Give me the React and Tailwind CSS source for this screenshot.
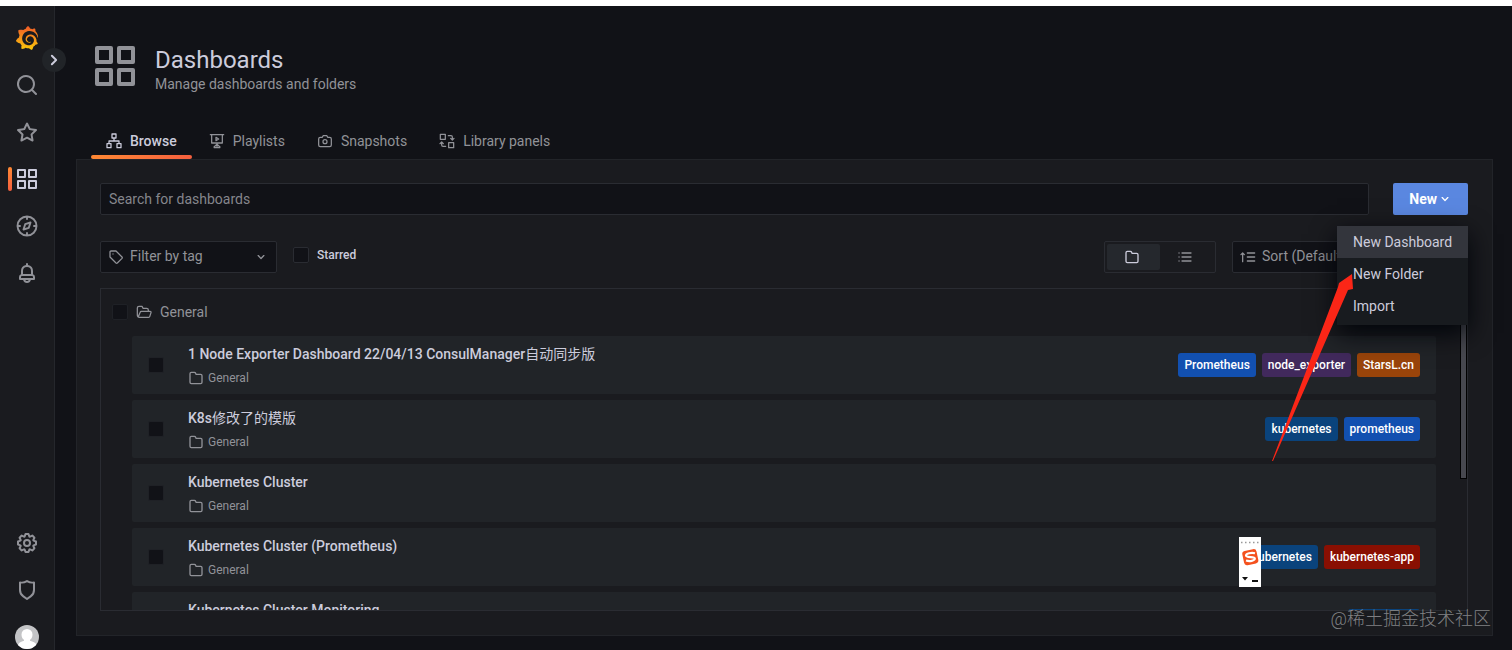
import { SiGrafana } from 'react-icons/si';

const SOLID = {
  apps: 'M10,13H3a1,1,0,0,0-1,1v7a1,1,0,0,0,1,1h7a1,1,0,0,0,1-1V14A1,1,0,0,0,10,13ZM9,20H4V15H9ZM21,2H14a1,1,0,0,0-1,1v7a1,1,0,0,0,1,1h7a1,1,0,0,0,1-1V3A1,1,0,0,0,21,2ZM20,9H15V4h5Zm1,4H14a1,1,0,0,0-1,1v7a1,1,0,0,0,1,1h7a1,1,0,0,0,1-1V14A1,1,0,0,0,21,13Zm-1,7H15V15h5ZM10,2H3A1,1,0,0,0,2,3v7a1,1,0,0,0,1,1h7a1,1,0,0,0,1-1V3A1,1,0,0,0,10,2ZM9,9H4V4H9Z',
  search: 'M21.71,20.29,18,16.61A9,9,0,1,0,16.61,18l3.68,3.68a1,1,0,0,0,1.42,0A1,1,0,0,0,21.71,20.29ZM11,18a7,7,0,1,1,7-7A7,7,0,0,1,11,18Z',
  star: 'M22,9.67A1,1,0,0,0,21.14,9l-5.69-.83L12.9,3a1,1,0,0,0-1.8,0L8.55,8.16,2.86,9a1,1,0,0,0-.81.68,1,1,0,0,0,.25,1l4.13,4-1,5.68A1,1,0,0,0,6.9,21.44L12,18.77l5.1,2.67a.93.93,0,0,0,.46.12,1,1,0,0,0,.59-.19,1,1,0,0,0,.4-1l-1-5.68,4.13-4A1,1,0,0,0,22,9.67Zm-6.15,4a1,1,0,0,0-.29.88l.72,4.2-3.76-2a1.06,1.06,0,0,0-.94,0l-3.76,2,.72-4.2a1,1,0,0,0-.29-.88l-3-3,4.21-.61a1,1,0,0,0,.76-.55L12,5.7l1.88,3.82a1,1,0,0,0,.76.55l4.21.61Z',
  folder: 'M19,5.5H12.72l-.32-1a3,3,0,0,0-2.84-2H5a3,3,0,0,0-3,3v13a3,3,0,0,0,3,3H19a3,3,0,0,0,3-3V8.5A3,3,0,0,0,19,5.5Zm1,13a1,1,0,0,1-1,1H5a1,1,0,0,1-1-1V5.5a1,1,0,0,1,1-1H9.56a1,1,0,0,1,.95.68l.54,1.64A1,1,0,0,0,12,7.5h7a1,1,0,0,1,1,1Z',
  bell: 'M18,13.18V10a6,6,0,0,0-5-5.91V3a1,1,0,0,0-2,0V4.09A6,6,0,0,0,6,10v3.18A3,3,0,0,0,4,16v2a1,1,0,0,0,1,1H8.14a4,4,0,0,0,7.72,0H19a1,1,0,0,0,1-1V16A3,3,0,0,0,18,13.18ZM8,10a4,4,0,0,1,8,0v3H8Zm4,10a2,2,0,0,1-1.72-1h3.44A2,2,0,0,1,12,20Zm6-3H6V16a1,1,0,0,1,1-1H17a1,1,0,0,1,1,1Z',
  down: 'M17,9.17a1,1,0,0,0-1.41,0L12,12.71,8.46,9.17a1,1,0,0,0-1.41,0,1,1,0,0,0,0,1.42l4.24,4.24a1,1,0,0,0,1.42,0L17,10.59A1,1,0,0,0,17,9.17Z',
  right: 'M14.83,11.29,10.59,7.05a1,1,0,0,0-1.42,0,1,1,0,0,0,0,1.41L12.71,12,9.17,15.54a1,1,0,0,0,0,1.41,1,1,0,0,0,.71.29,1,1,0,0,0,.71-.29l4.24-4.24A1,1,0,0,0,14.83,11.29Z',
  shield: 'M19.63,3.65a1,1,0,0,0-.84-.2,8,8,0,0,1-6.22-1.27,1,1,0,0,0-1.14,0A8,8,0,0,1,5.21,3.45a1,1,0,0,0-.84.2A1,1,0,0,0,4,4.43v7.45a9,9,0,0,0,3.77,7.33l3.65,2.6a1,1,0,0,0,1.16,0l3.65-2.6A9,9,0,0,0,20,11.88V4.43A1,1,0,0,0,19.63,3.65ZM18,11.88a7,7,0,0,1-2.93,5.7L12,19.77,8.93,17.58A7,7,0,0,1,6,11.88V5.58a10,10,0,0,0,6-1.39,10,10,0,0,0,6,1.39Z',
  cog: 'M21.32,9.55l-1.89-.63.89-1.78A1,1,0,0,0,20.13,6L18,3.87a1,1,0,0,0-1.15-.19l-1.78.89-.63-1.89A1,1,0,0,0,13.5,2h-3a1,1,0,0,0-.95.68L8.92,4.57,7.14,3.68A1,1,0,0,0,6,3.87L3.87,6a1,1,0,0,0-.19,1.15l.89,1.78-1.89.63A1,1,0,0,0,2,10.5v3a1,1,0,0,0,.68.95l1.89.63-.89,1.78A1,1,0,0,0,3.87,18L6,20.13a1,1,0,0,0,1.15.19l1.78-.89.63,1.89a1,1,0,0,0,.95.68h3a1,1,0,0,0,.95-.68l.63-1.89,1.78.89A1,1,0,0,0,18,20.13L20.13,18a1,1,0,0,0,.19-1.15l-.89-1.78,1.89-.63A1,1,0,0,0,22,13.5v-3A1,1,0,0,0,21.32,9.55ZM20,12.78l-1.2.4A2,2,0,0,0,17.64,16l.57,1.14-1.1,1.1L16,17.64a2,2,0,0,0-2.79,1.16l-.4,1.2H11.22l-.4-1.2A2,2,0,0,0,8,17.64l-1.14.57-1.1-1.1L6.36,16A2,2,0,0,0,5.2,13.18L4,12.78V11.22l1.2-.4A2,2,0,0,0,6.36,8L5.79,6.89l1.1-1.1L8,6.36A2,2,0,0,0,10.82,5.2l.4-1.2h1.56l.4,1.2A2,2,0,0,0,16,6.36l1.14-.57,1.1,1.1L17.64,8a2,2,0,0,0,1.16,2.79l1.2.4ZM12,8a4,4,0,1,0,4,4A4,4,0,0,0,12,8Zm0,6a2,2,0,1,1,2-2A2,2,0,0,1,12,14Z',
};

const LINE = {
  compass: 'M12 2.500a9.500 9.500 0 1 0 0 19a9.500 9.500 0 1 0 0-19ZM12 3v2M12 19v2M3 12h2M19 12h2M15.500 8.500l-1.700 5.300-5.300 1.700 1.700-5.300Z',
  sitemap: 'M9 1.500h6v6H9ZM1.500 16h6v6h-6ZM16.500 16h6v6h-6ZM12 7.500v4.500M4.500 16v-4h15v4',
  playlist: 'M2 2.500h20M4 3v12h16V3M12 15v7M12 17l-4.500 4M12 17l4.500 4M8 22h8M10.500 6.500v5l4-2.500Z',
  camera: 'M5 6.500h3l1.200-2.500h5.600L16 6.500h3a2.500 2.500 0 0 1 2.500 2.500V18a2.500 2.500 0 0 1-2.500 2.500H5a2.500 2.500 0 0 1-2.500-2.500V9a2.500 2.500 0 0 1 2.500-2.500ZM12 10a3 3 0 1 0 0 6a3 3 0 1 0 0-6Z',
  library: 'M2 2h7.500v7.500H2ZM14.500 14.500H22V22h-7.500ZM14 4h4a2 2 0 0 1 2 2v4M17.500 8l2.500 2.500L22.500 8M10 20H6a2 2 0 0 1-2-2v-4M1.500 16L4 13.500 6.500 16',
  tag: 'M3 4.500A1.500 1.500 0 0 1 4.500 3H12l9 9a1.500 1.500 0 0 1 0 2l-7 7a1.500 1.500 0 0 1-2 0l-9-9ZM7.500 7.500v.1',
  list: 'M3 6h.1M7.500 6H21M3 12h.1M7.500 12H21M3 18h.1M7.500 18H21',
  sort: 'M4 19V6M1.500 8.500L4 6l2.500 2.500M11 6h11M11 12h11M11 18h11',
  folderOpen: 'M5 20a3 3 0 0 1-3-3V6a2.500 2.500 0 0 1 2.500-2.500H9L10.500 6.500H16a2.500 2.500 0 0 1 2.500 2.500V11M3.500 19l2.700-6.700A2 2 0 0 1 8 11H21a1.500 1.500 0 0 1 1.500 2l-1.800 5.500a2 2 0 0 1-1.900 1.500H5',
};

function Icon({ name, className }) {
  if (SOLID[name]) {
    return (
      <svg viewBox="0 0 24 24" fill="currentColor" aria-hidden="true" className={`shrink-0 ${className}`}>
        <path d={SOLID[name]} />
      </svg>
    );
  }
  return (
    <svg viewBox="0 0 24 24" fill="none" stroke="currentColor" strokeWidth="1.900" strokeLinecap="round" strokeLinejoin="round" aria-hidden="true" className={`shrink-0 ${className}`}>
      <path d={LINE[name]} />
    </svg>
  );
}

function NavItem({ icon, label, active }) {
  return (
    <a href="#" aria-label={label} className={`relative flex h-6 w-full items-center justify-center ${active ? 'text-[#ccccdc]' : 'text-[#919298]'}`}>
      {active && <span className="absolute left-2 h-6 w-1 rounded-sm bg-linear-to-b from-[#ff8833] to-[#f55f3e]" />}
      <Icon name={icon} className="size-6" />
    </a>
  );
}

function Sidebar() {
  return (
    <nav className="relative flex w-[55px] shrink-0 flex-col justify-between border-r border-[#25272c] bg-[#1a1b1f] pt-5 pb-px">
      <div className="flex flex-col gap-[23px]">
        <a href="#" aria-label="Grafana" className="flex h-6 justify-center">
          <svg width="0" height="0" className="absolute">
            <defs>
              <linearGradient id="logo" x1="0" y1="0" x2="0" y2="1">
                <stop offset="0" stopColor="#f05a28" />
                <stop offset="1" stopColor="#fbca0a" />
              </linearGradient>
            </defs>
          </svg>
          <SiGrafana fill="url(#logo)" className="size-6" />
        </a>
        <NavItem icon="search" label="Search dashboards" />
        <NavItem icon="star" label="Starred" />
        <NavItem icon="apps" label="Dashboards" active />
        <NavItem icon="compass" label="Explore" />
        <NavItem icon="bell" label="Alerting" />
      </div>
      <div className="flex flex-col gap-[23px]">
        <NavItem icon="cog" label="Configuration" />
        <NavItem icon="shield" label="Server admin" />
        <a href="#" aria-label="Profile" className="flex h-6 justify-center">
          <svg viewBox="0 0 24 24" className="size-6" aria-hidden="true">
            <clipPath id="avatar"><circle cx="12" cy="12" r="12" /></clipPath>
            <g clipPath="url(#avatar)">
              <rect width="24" height="24" fill="#c3c4c6" />
              <path d="M12 4a5.500 5.500 0 0 1 5.500 5.500c0 2.500-1 4.300-2.500 5.300v1c3 .8 5.500 1.700 6.500 4.200V24H3v-4c1-2.500 3-3.400 6-4.200v-1c-1.500-1-2.500-2.800-2.500-5.300A5.500 5.500 0 0 1 12 4Z" fill="#fff" />
            </g>
          </svg>
        </a>
      </div>
      <button type="button" aria-label="Expand menu" className="absolute top-[42px] -right-3 flex size-6 items-center justify-center rounded-full bg-[#212428] text-[#ccccdc]">
        <Icon name="right" className="size-6" />
      </button>
    </nav>
  );
}

const TABS = [
  { icon: 'sitemap', label: 'Browse', active: true },
  { icon: 'playlist', label: 'Playlists' },
  { icon: 'camera', label: 'Snapshots' },
  { icon: 'library', label: 'Library panels' },
];

const ROWS = [
  {
    title: '1 Node Exporter Dashboard 22/04/13 ConsulManager',
    suffix: '自动同步版',
    tags: [
      { name: 'Prometheus', color: 'bg-[#1250b0]' },
      { name: 'node_exporter', color: 'bg-[#41295c]' },
      { name: 'StarsL.cn', color: 'bg-[#99440a]' },
    ],
  },
  {
    title: 'K8s',
    suffix: '修改了的模版',
    tags: [
      { name: 'kubernetes', color: 'bg-[#0a437c]' },
      { name: 'prometheus', color: 'bg-[#1250b0]' },
    ],
  },
  { title: 'Kubernetes Cluster', tags: [] },
  {
    title: 'Kubernetes Cluster (Prometheus)',
    tags: [
      { name: 'kubernetes', color: 'bg-[#0a437c]' },
      { name: 'kubernetes-app', color: 'bg-[#890f02]' },
    ],
  },
  { title: 'Kubernetes Cluster Monitoring', tags: [{ name: 'kubernetes', color: 'bg-[#0a437c]' }] },
];

function Check({ label }) {
  return <input type="checkbox" aria-label={label} className="size-4 shrink-0 appearance-none rounded-xs border border-[#1f2126] bg-[#111217]" />;
}

function Row({ title, suffix, tags }) {
  return (
    <li className="flex h-[58px] shrink-0 items-center rounded-xs bg-[#212428] px-4">
      <Check label={`Select ${title}`} />
      <div className="ml-6 flex min-w-0 flex-1 flex-col gap-1.5 pb-px">
        <a href="#" className="truncate text-[14px] leading-5 font-medium text-[#ccccdc]">
          {title}
          {suffix && <span className="font-normal">{suffix}</span>}
        </a>
        <span className="flex items-center gap-1 text-[12px] leading-4 text-[#919298]">
          <Icon name="folder" className="size-4" />
          General
        </span>
      </div>
      <div className="flex gap-1.5">
        {tags.map((t) => (
          <span key={t.name} className={`rounded-[3px] px-1.5 py-1 text-[12px] leading-4 font-medium text-white ${t.color}`}>{t.name}</span>
        ))}
      </div>
    </li>
  );
}

function NewMenu() {
  return (
    <div className="relative">
      <button type="button" className="flex h-8 items-center rounded-xs bg-[#5a87e0] pr-[15px] pl-4 text-[14px] font-bold text-white">
        New
        <Icon name="down" className="size-4" />
      </button>
      <div role="menu" className="absolute top-full right-0 z-10 mt-[11px] flex w-[131px] flex-col bg-[#181b1f] pb-[3px] shadow-[0_8px_24px_rgb(1,4,9)]">
        <button type="button" role="menuitem" className="h-8 bg-[#33353c] px-4 text-left text-[14px] whitespace-nowrap text-[#ccccdc]">New Dashboard</button>
        <button type="button" role="menuitem" className="h-8 px-4 text-left text-[14px] text-[#ccccdc]">New Folder</button>
        <button type="button" role="menuitem" className="h-8 px-4 text-left text-[14px] text-[#ccccdc]">Import</button>
      </div>
    </div>
  );
}

export default function App() {
  return (
    <div className="relative flex h-screen flex-col overflow-hidden bg-[#111217] font-[Roboto,'Noto_Sans_CJK_SC',sans-serif] text-[14px] text-[#919298]">
      <div className="h-1.5 shrink-0 bg-white" />
      <div className="flex min-h-0 flex-1">
        <Sidebar />
        <main className="flex min-w-0 flex-1 flex-col pr-[19px] pb-3.5 pl-[21px]">
          <header className="flex items-start gap-4 px-[15px] pt-9">
            <Icon name="apps" className="size-12" />
            <div className="pt-0.5">
              <h1 className="text-[24px] leading-8 text-[#ccccdc]">Dashboards</h1>
              <p className="leading-4">Manage dashboards and folders</p>
            </div>
          </header>
          <div role="tablist" className="mt-[31px] flex gap-0.5 px-[15px]">
            {TABS.map((t) => (
              <button
                key={t.label}
                type="button"
                role="tab"
                aria-selected={!!t.active}
                className={`relative flex h-9 items-center gap-2 px-[15px] ${t.active ? 'font-medium text-[#ccccdc]' : ''}`}
              >
                <Icon name={t.icon} className="size-4" />
                {t.label}
                {t.active && <span className="absolute inset-x-0 bottom-0 h-1 rounded-xs bg-linear-to-r from-[#ff8833] to-[#f55f3e]" />}
              </button>
            ))}
          </div>
          <section className="flex min-h-0 flex-1 flex-col border border-[#222429] bg-[#1a1b1f] pt-[23px] pr-6 pb-6 pl-[23px]">
            <div className="flex gap-6">
              <input type="text" aria-label="Search for dashboards" placeholder="Search for dashboards" className="h-8 min-w-0 flex-1 rounded-xs border border-[#2a2c32] bg-[#111217] px-2 placeholder:text-[#85868c]" />
              <NewMenu />
            </div>
            <div className="mt-[26px] flex items-center">
              <div className="relative flex items-center">
                <Icon name="tag" className="absolute left-2 size-4" />
                <select aria-label="Filter by tag" className="h-8 w-[177px] appearance-none rounded-xs border border-[#2a2c32] bg-[#111217] pb-0.5 pl-[29px]">
                  <option>Filter by tag</option>
                </select>
                <Icon name="down" className="pointer-events-none absolute right-2 size-4" />
              </div>
              <label className="ml-4 flex items-center gap-2 pb-1 text-[12px] font-medium text-[#ccccdc]">
                <input type="checkbox" className="size-4 appearance-none rounded-xs border border-[#2a2c32] bg-[#111217]" />
                Starred
              </label>
              <div className="mr-4 ml-auto flex h-8 w-28 rounded-xs border border-[#2a2c32] p-0.5">
                <label className="flex flex-1 items-center justify-center rounded-xs bg-[#25282d] pr-1 text-[#ccccdc]">
                  <input type="radio" name="layout" aria-label="View by folders" defaultChecked className="sr-only" />
                  <Icon name="folder" className="size-4" />
                </label>
                <label className="flex flex-1 items-center justify-center pr-1">
                  <input type="radio" name="layout" aria-label="View as list" className="sr-only" />
                  <Icon name="list" className="size-4" />
                </label>
              </div>
              <div className="relative flex items-center">
                <Icon name="sort" className="absolute left-2 size-4" />
                <select aria-label="Sort" className="h-8 w-[236px] appearance-none rounded-xs border border-[#2a2c32] bg-[#111217] pb-0.5 pl-[29px]">
                  <option>Sort (Default A–Z)</option>
                </select>
              </div>
            </div>
            <div className="mt-[15px] flex min-h-0 flex-1 overflow-hidden border border-[#2a2c32]">
              <div className="flex min-w-0 flex-1 flex-col pr-6">
                <div className="flex h-[46px] shrink-0 items-center gap-2 pl-[11px]">
                  <Check label="Select folder General" />
                  <Icon name="folderOpen" className="size-4" />
                  General
                </div>
                <ul className="ml-[31px] flex flex-col gap-1.5 pt-px">
                  {ROWS.map((r) => (
                    <Row key={r.title} {...r} />
                  ))}
                </ul>
              </div>
              <div className="h-[190px] w-[7px] shrink-0 border border-black bg-[#47484f]" />
            </div>
          </section>
        </main>
      </div>

      <svg viewBox="0 0 82 190" className="absolute top-[273px] right-[158px] z-20 h-[190px] w-[82px]" aria-hidden="true">
        <path d="M0 188L66 14 67 10 80 1 81 16 76 17 1 188Z" fill="#fb2617" />
      </svg>
      <div className="absolute top-[537px] right-[251px] h-[50px] w-[22px] bg-white" aria-hidden="true">
        <svg viewBox="0 0 22 50" className="h-[50px] w-[22px]">
          <path d="M2 5.500h18" stroke="#999" strokeWidth="1.500" strokeDasharray="1.500 2.500" />
          <rect x="4" y="13" width="14.500" height="14.500" rx="3" fill="#f4511e" transform="rotate(-12 11 20)" />
          <path d="M16 16.200c-3.500-.8-9 .1-9 2.300 0 2.600 8.800.6 8.800 3.100 0 2.300-5.300 3-8.800 1.900" fill="none" stroke="#fff" strokeWidth="2.200" />
          <path d="M3 40h6l-3 3.500ZM13 43h6v2h-6Z" fill="#111" />
        </svg>
      </div>
      <div className="absolute right-[21px] bottom-[17px] z-20 text-[18px] leading-7 font-light text-white/45">@稀土掘金技术社区</div>
    </div>
  );
}
